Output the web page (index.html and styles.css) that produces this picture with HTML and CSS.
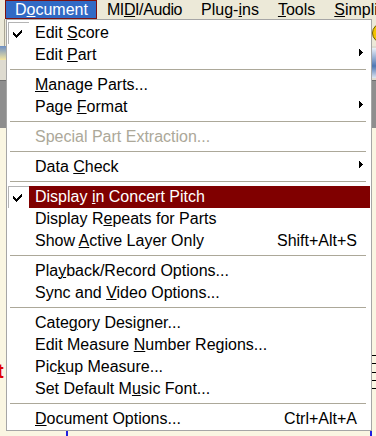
FILE: index.html
```html
<!DOCTYPE html>
<html lang="en">
<head>
  <meta charset="UTF-8" />
  <title>Document menu</title>
  <link rel="stylesheet" href="styles.css">
</head>
<body>
  <div class="app">
    <div class="menubar">
      <span class="mb-item active">D<u>o</u>cument</span>
      <span class="mb-item midi">MI<u>D</u>I/Audio</span>
      <span class="mb-item">Plug-<u>i</u>ns</span>
      <span class="mb-item"><u>T</u>ools</span>
      <span class="mb-item"><u>S</u>implify</span>
    </div>

    <div class="workspace">
      <div class="tools1"><span class="face"></span></div>
      <div class="tools2"><span class="tb-bit"></span><span class="tb-icon"></span></div>
      <div class="palette"></div>
      <div class="score">
        <span class="red-t">t</span>
        <div class="staff"><i></i><i></i><i></i><i></i><i></i></div>
        <span class="page-line left"></span>
        <span class="page-line right"></span>
      </div>
    </div>

    <div class="menu">
      <div class="row">
        <span class="check on"><svg width="9" height="8" viewBox="0 0 9 8" shape-rendering="crispEdges"><path d="M8 0h1v1h-1z M7 1h2v1h-2z M0 2h1v1h-1z M6 2h3v1h-3z M0 3h2v1h-2z M5 3h3v1h-3z M0 4h3v1h-3z M4 4h3v1h-3z M1 5h5v1h-5z M2 6h3v1h-3z M3 7h1v1h-1z"/></svg></span>
        <span class="body"><span class="label">Edit <u>S</u>core</span></span>
      </div>
      <div class="row">
        <span class="check"></span>
        <span class="body"><span class="label">Edit <u>P</u>art</span><svg class="arrow" width="4" height="7" viewBox="0 0 4 7" shape-rendering="crispEdges"><path d="M0 0h1v7h-1z M1 1h1v5h-1z M2 2h1v3h-1z M3 3h1v1h-1z"/></svg></span>
      </div>
      <div class="sep"></div>
      <div class="row">
        <span class="check"></span>
        <span class="body"><span class="label"><u>M</u>anage Parts...</span></span>
      </div>
      <div class="row">
        <span class="check"></span>
        <span class="body"><span class="label">Page <u>F</u>ormat</span><svg class="arrow" width="4" height="7" viewBox="0 0 4 7" shape-rendering="crispEdges"><path d="M0 0h1v7h-1z M1 1h1v5h-1z M2 2h1v3h-1z M3 3h1v1h-1z"/></svg></span>
      </div>
      <div class="sep"></div>
      <div class="row off">
        <span class="check"></span>
        <span class="body"><span class="label">Special Part Extraction...</span></span>
      </div>
      <div class="sep"></div>
      <div class="row">
        <span class="check"></span>
        <span class="body"><span class="label">Data <u>C</u>heck</span><svg class="arrow" width="4" height="7" viewBox="0 0 4 7" shape-rendering="crispEdges"><path d="M0 0h1v7h-1z M1 1h1v5h-1z M2 2h1v3h-1z M3 3h1v1h-1z"/></svg></span>
      </div>
      <div class="sep"></div>
      <div class="row hot">
        <span class="check on"><svg width="9" height="8" viewBox="0 0 9 8" shape-rendering="crispEdges"><path d="M8 0h1v1h-1z M7 1h2v1h-2z M0 2h1v1h-1z M6 2h3v1h-3z M0 3h2v1h-2z M5 3h3v1h-3z M0 4h3v1h-3z M4 4h3v1h-3z M1 5h5v1h-5z M2 6h3v1h-3z M3 7h1v1h-1z"/></svg></span>
        <span class="body"><span class="label">Display <u>i</u>n Concert Pitch</span></span>
      </div>
      <div class="row">
        <span class="check"></span>
        <span class="body"><span class="label">Display R<u>e</u>peats for Parts</span></span>
      </div>
      <div class="row">
        <span class="check"></span>
        <span class="body"><span class="label">Show <u>A</u>ctive Layer Only</span><span class="key">Shift+Alt+S</span></span>
      </div>
      <div class="sep"></div>
      <div class="row">
        <span class="check"></span>
        <span class="body"><span class="label">Pla<u>y</u>back/Record Options...</span></span>
      </div>
      <div class="row">
        <span class="check"></span>
        <span class="body"><span class="label">Sync and <u>V</u>ideo Options...</span></span>
      </div>
      <div class="sep"></div>
      <div class="row">
        <span class="check"></span>
        <span class="body"><span class="label">Cate<u>g</u>ory Designer...</span></span>
      </div>
      <div class="row">
        <span class="check"></span>
        <span class="body"><span class="label">Edit Measure <u>N</u>umber Regions...</span></span>
      </div>
      <div class="row">
        <span class="check"></span>
        <span class="body"><span class="label">Pic<u>k</u>up Measure...</span></span>
      </div>
      <div class="row">
        <span class="check"></span>
        <span class="body"><span class="label">Set Default M<u>u</u>sic Font...</span></span>
      </div>
      <div class="sep"></div>
      <div class="row">
        <span class="check"></span>
        <span class="body"><span class="label"><u>D</u>ocument Options...</span><span class="key">Ctrl+Alt+A</span></span>
      </div>
    </div>
  </div>
</body>
</html>
```

FILE: styles.css
```css
* {
  box-sizing: border-box;
}
body {
  margin: 0;
  font-family: "Liberation Sans", Arial, sans-serif;
  font-size: 16px;
  color: #000;
}
u {
  text-decoration: underline;
  text-decoration-thickness: 1px;
  text-underline-offset: 1px;
}

.app {
  position: relative;
  width: 376px;
  height: 436px;
  overflow: hidden;
  display: flex;
  flex-direction: column;
  background: #faf6e2;
}

/* menu bar */
.menubar {
  height: 19px;
  display: flex;
  padding-left: 5px;
  background: #ece9d8;
  white-space: nowrap;
}
.mb-item {
  height: 19px;
  line-height: 17px;
  padding: 0 8px 0 9px;
  border: 1px solid transparent;
}
.mb-item.active {
  background: #316ac5;
  border-color: #7b1010;
  color: #fff;
}
.mb-item.midi {
  letter-spacing: -0.4px;
}

/* what is behind the menu */
.workspace {
  flex: 1;
  display: flex;
  flex-direction: column;
}
.tools1 {
  height: 27px;
  display: flex;
  justify-content: flex-end;
  align-items: center;
  background: #ece9d8;
  border-left: 4px solid #ece9d8;
  box-shadow: inset 5px 0 0 -4px #a9a594;
}
.face {
  width: 20px;
  height: 20px;
  margin-right: -16px;
  border-radius: 50%;
  background: #f2c500;
  border: 1px solid #6b5a00;
}
.tools2 {
  height: 34px;
  display: flex;
  justify-content: space-between;
  align-items: flex-start;
  background: #dedbd0;
}
.tb-bit {
  width: 6px;
  height: 14px;
  background: linear-gradient(#6d8fc4, #f5e6a0);
}
.tb-icon {
  width: 6px;
  height: 30px;
  margin-top: 2px;
  background: linear-gradient(#eaf0f8, #4f77b3 60%, #dde5f0);
}
.palette {
  height: 48px;
  background: #8e8e8e;
  border-top: 1px solid #6e6e6e;
}
.score {
  flex: 1;
  position: relative;
}
.red-t {
  position: absolute;
  left: -3px;
  top: 232px;
  color: #e00000;
  font-size: 20px;
  font-weight: bold;
}
.staff {
  position: absolute;
  left: 360px;
  top: 227px;
  width: 20px;
  display: flex;
  flex-direction: column;
  gap: 7.3px;
}
.staff i {
  height: 1px;
  background: #000;
}
.page-line {
  position: absolute;
  bottom: 0;
  width: 2px;
  height: 8px;
  background: #2020e0;
}
.page-line.left {
  left: 66px;
}
.page-line.right {
  left: 370px;
}

/* dropdown */
.menu {
  position: absolute;
  left: 6px;
  top: 19px;
  width: 366px;
  padding-top: 2px;
  background: #fff;
  border: 1px solid #a6a6a6;
}
.row {
  display: flex;
  height: 22px;
  margin: 0 1px;
}
.check {
  width: 21px;
  height: 22px;
  display: flex;
  align-items: center;
  padding-left: 5px;
}
.check.on {
  border-top: 1px solid #b4b4b4;
  border-left: 1px solid #b4b4b4;
  padding-left: 4px;
}
.body {
  flex: 1;
  display: flex;
  align-items: center;
  padding: 0 7px 0 6px;
  line-height: 22px;
  white-space: nowrap;
}
.label {
  flex: 1;
}
.key {
  margin-right: 6px;
}
.arrow {
  align-self: flex-start;
  margin-top: 5px;
}
.row.hot .body {
  background: #800000;
  color: #fff;
}
.row.off {
  color: #aca899;
}
.sep {
  height: 1px;
  margin: 3px 5px 4px 3px;
  background: #aca899;
}
```
